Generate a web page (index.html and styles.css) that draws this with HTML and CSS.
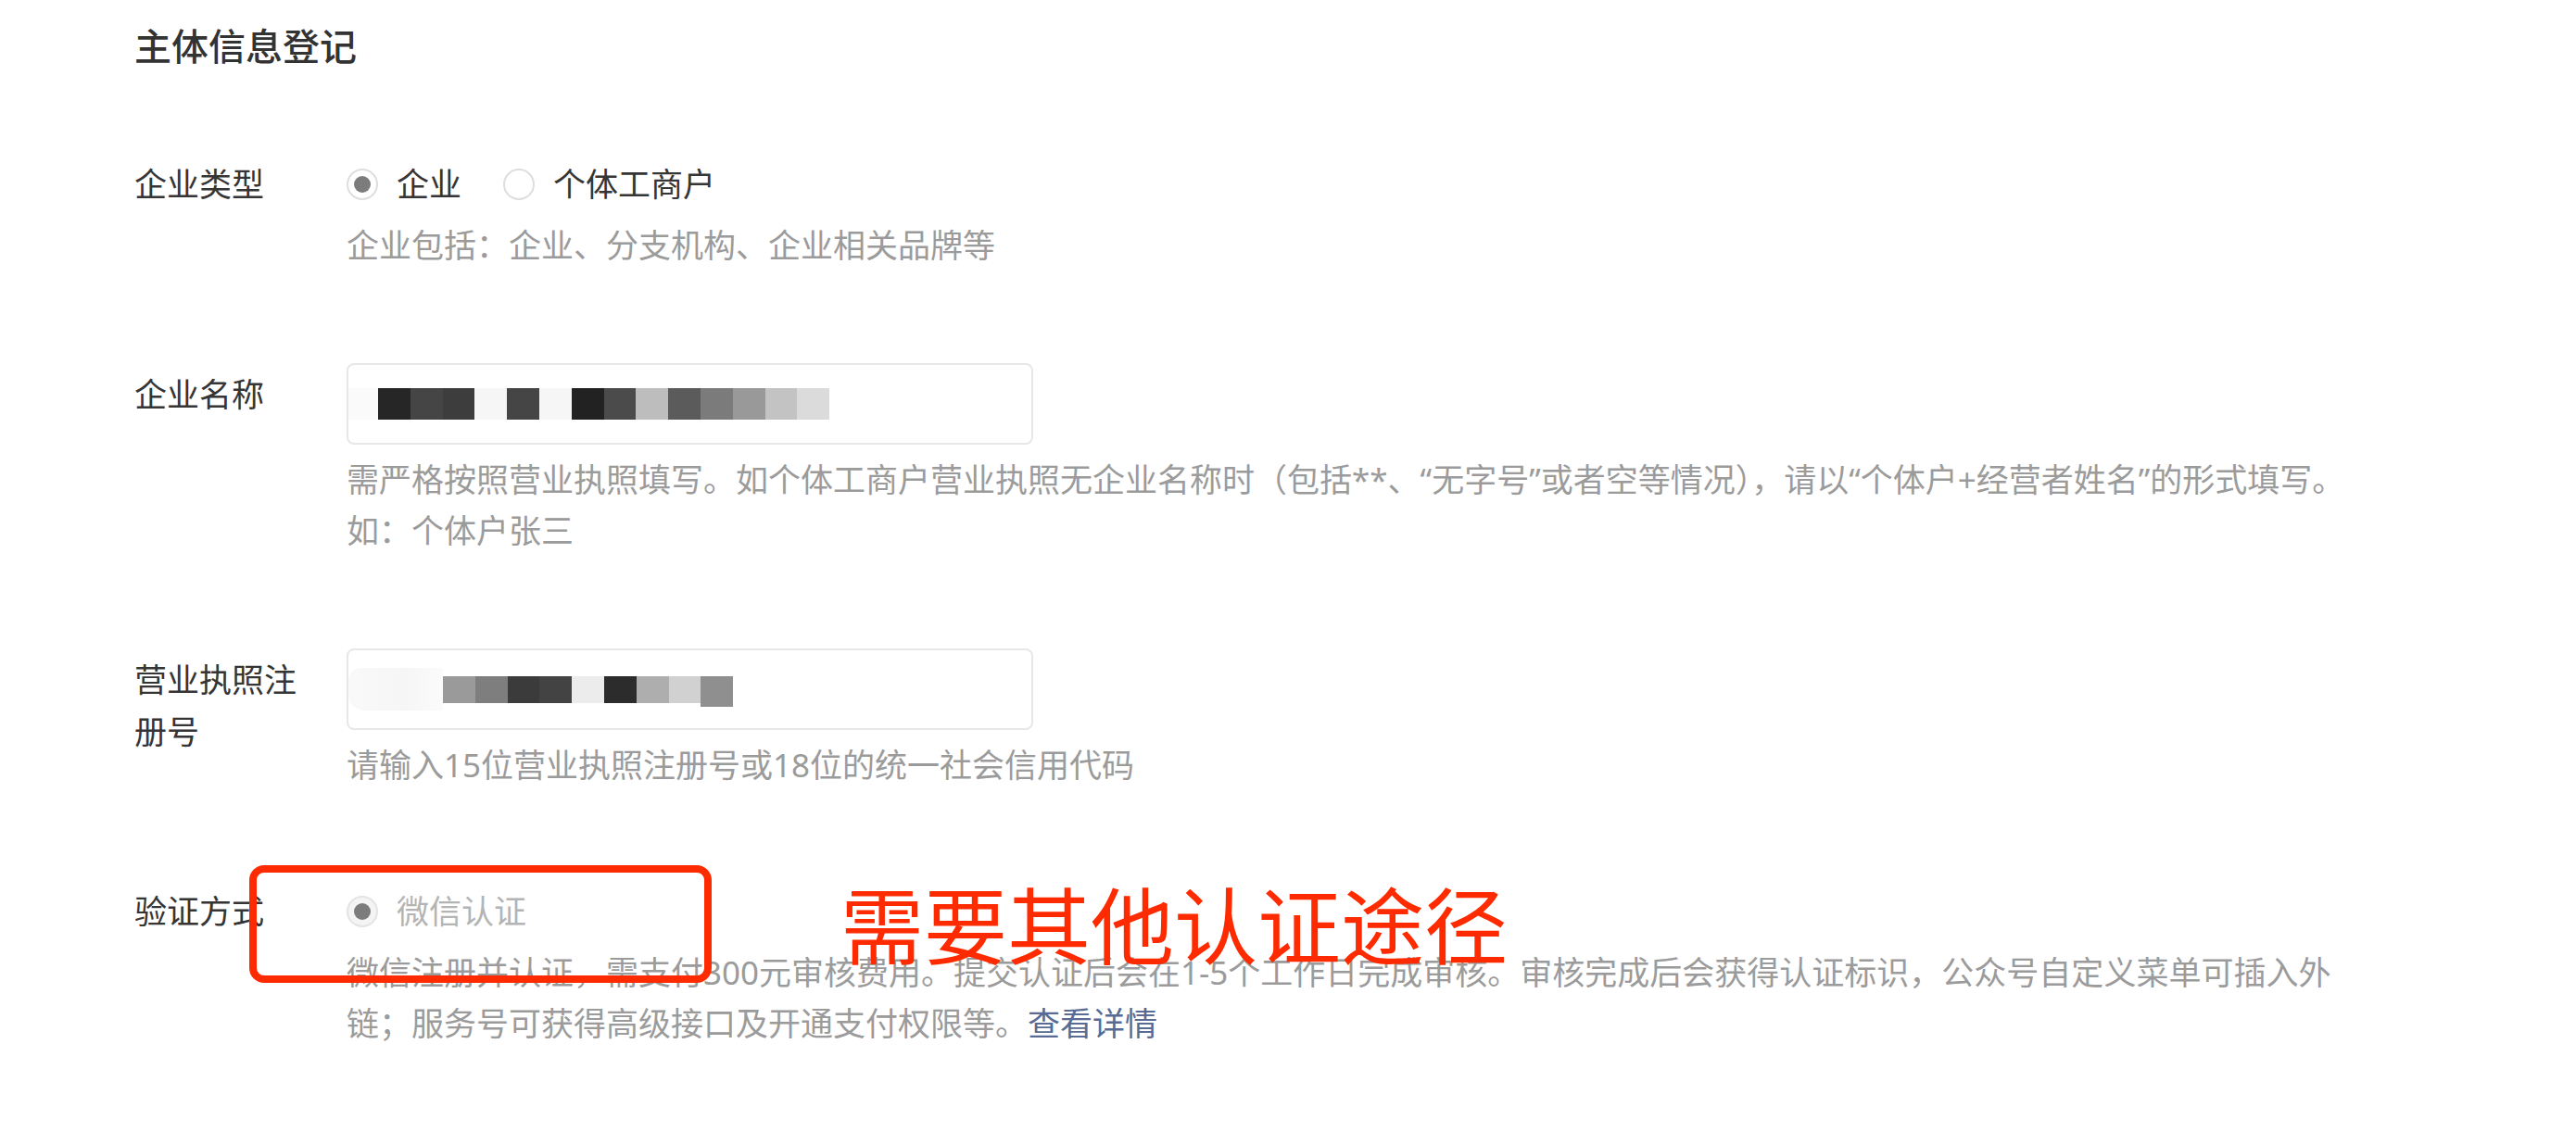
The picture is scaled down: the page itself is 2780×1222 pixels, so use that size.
FILE: index.html
```html
<!DOCTYPE html>
<html lang="zh-CN">
<head>
<meta charset="utf-8">
<title>主体信息登记</title>
<link rel="stylesheet" href="styles.css">
</head>
<body>
<div class="page">
  <h2 class="section-title">主体信息登记</h2>
  <div class="form">
    <div class="row">
      <div class="label">企业类型</div>
      <div class="field">
        <div class="radios">
          <label class="radio checked"><span class="radio-mark"></span><span class="radio-text">企业</span></label>
          <label class="radio"><span class="radio-mark"></span><span class="radio-text">个体工商户</span></label>
        </div>
        <div class="help">企业包括：企业、分支机构、企业相关品牌等</div>
      </div>
    </div>

    <div class="row row-input">
      <div class="label">企业名称</div>
      <div class="field">
        <div class="input">
          <div class="mosaic">
            <i class="lead lead-a"></i><i class="tile g26"></i><i class="tile g45"></i><i class="tile g3d"></i><i class="tile gf6"></i><i class="tile g45"></i><i class="tile gf6"></i><i class="tile g22"></i><i class="tile g4b"></i><i class="tile gbd"></i><i class="tile g5b"></i><i class="tile g7b"></i><i class="tile g99"></i><i class="tile gc3"></i><i class="tile gdb"></i>
          </div>
        </div>
        <div class="help">需严格按照营业执照填写。如个体工商户营业执照无企业名称时（包括**、“无字号”或者空等情况），请以“个体户+经营者姓名”的形式填写。<br>如：个体户张三</div>
      </div>
    </div>

    <div class="row row-input">
      <div class="label">营业执照注册号</div>
      <div class="field">
        <div class="input">
          <div class="mosaic mosaic-b">
            <i class="lead lead-b"></i><i class="tile g9a"></i><i class="tile g7e"></i><i class="tile g3b"></i><i class="tile g43"></i><i class="tile gec"></i><i class="tile g2c"></i><i class="tile gae"></i><i class="tile gd1"></i><i class="tile g8f tall"></i>
          </div>
        </div>
        <div class="help">请输入15位营业执照注册号或18位的统一社会信用代码</div>
      </div>
    </div>

    <div class="row row-verify">
      <div class="label">验证方式</div>
      <div class="field">
        <div class="radios">
          <label class="radio checked disabled"><span class="radio-mark"></span><span class="radio-text">微信认证</span></label>
        </div>
        <div class="help">微信注册并认证，需支付300元审核费用。提交认证后会在1-5个工作日完成审核。审核完成后会获得认证标识，公众号自定义菜单可插入外<br>链；服务号可获得高级接口及开通支付权限等。<a href="#" class="link">查看详情</a></div>
      </div>
      <div class="annot-box"></div>
      <div class="annot-text">需要其他认证途径</div>
    </div>
  </div>
</div>
</body>
</html>
```

FILE: styles.css
```css
html, body {
  margin: 0;
  padding: 0;
  background: #ffffff;
}

body {
  font-family: "Noto Sans", "Noto Sans CJK SC", "Liberation Sans", sans-serif;
  color: #353535;
}

.page {
  padding: 22px 0 0 145px;
}

.section-title {
  margin: 0;
  font-size: 40px;
  line-height: 56px;
  font-weight: 500;
  color: #333333;
}

.form {
  margin-top: 93px;
  display: flex;
  flex-direction: column;
  gap: 100px;
}

.row {
  display: flex;
  align-items: flex-start;
}

.row-verify {
  position: relative;
  margin-top: 3px;
}

.label {
  width: 190px;
  margin-right: 39px;
  flex-shrink: 0;
  font-size: 35px;
  line-height: 56px;
  color: #353535;
}

.row-input .label {
  padding-top: 6px;
}

.field {
  display: flex;
  flex-direction: column;
}

.radios {
  display: flex;
  align-items: center;
  height: 56px;
}

.radio {
  display: flex;
  align-items: center;
  margin-right: 45px;
}

.radio-mark {
  width: 34px;
  height: 34px;
  box-sizing: border-box;
  border: 2px solid #dedede;
  border-radius: 50%;
  background: #ffffff;
  display: flex;
  align-items: center;
  justify-content: center;
  margin-right: 20px;
}

.radio.checked .radio-mark::after {
  content: "";
  width: 18px;
  height: 18px;
  border-radius: 50%;
  background: #7c7c7c;
}

.radio-text {
  font-size: 35px;
  line-height: 56px;
  color: #353535;
}

.radio.disabled .radio-mark {
  background: #f4f4f4;
  border-color: #e4e4e4;
}

.radio.disabled .radio-text {
  color: #b4b4b4;
}

.help {
  margin-top: 10px;
  font-size: 35px;
  line-height: 55px;
  color: #9b9b9b;
  white-space: nowrap;
}

.link {
  color: #576b95;
  text-decoration: none;
}

.input {
  width: 741px;
  height: 88px;
  box-sizing: border-box;
  border: 2px solid #e7e7e7;
  border-radius: 8px;
  display: flex;
  align-items: center;
  overflow: hidden;
  background: #ffffff;
}

.mosaic {
  display: flex;
  align-items: center;
}

.mosaic i {
  display: block;
}

.tile {
  width: 34.8px;
  height: 34px;
}

.mosaic-b .tile {
  height: 29px;
}

.mosaic-b .tile.tall {
  height: 33px;
  margin-top: 4px;
}

.lead-a {
  width: 32px;
  height: 34px;
  background: #fafafa;
}

.lead-b {
  width: 102px;
  height: 46px;
  background: linear-gradient(90deg, #f9f9f9 0%, #f6f6f6 60%, #fbfbfb 100%);
  border-radius: 14px 0 0 18px;
}

.g22 { background: #222222; }
.g26 { background: #262626; }
.g2c { background: #2c2c2c; }
.g3b { background: #3b3b3b; }
.g3d { background: #3d3d3d; }
.g43 { background: #434343; }
.g45 { background: #454545; }
.g4b { background: #4b4b4b; }
.g5b { background: #5b5b5b; }
.g7b { background: #7b7b7b; }
.g7e { background: #7e7e7e; }
.g8f { background: #8f8f8f; }
.g99 { background: #999999; }
.g9a { background: #9a9a9a; }
.gae { background: #aeaeae; }
.gbd { background: #bdbdbd; }
.gc3 { background: #c3c3c3; }
.gd1 { background: #d1d1d1; }
.gdb { background: #dbdbdb; }
.gec { background: #ececec; }
.gf6 { background: #f6f6f6; }

.annot-box {
  position: absolute;
  left: 124px;
  top: -22px;
  width: 499px;
  height: 127px;
  box-sizing: border-box;
  border: 8px solid #fe2a00;
  border-radius: 16px;
}

.annot-text {
  position: absolute;
  left: 762px;
  top: -2px;
  font-size: 90px;
  line-height: 1;
  color: #fe2a00;
  white-space: nowrap;
}
```
